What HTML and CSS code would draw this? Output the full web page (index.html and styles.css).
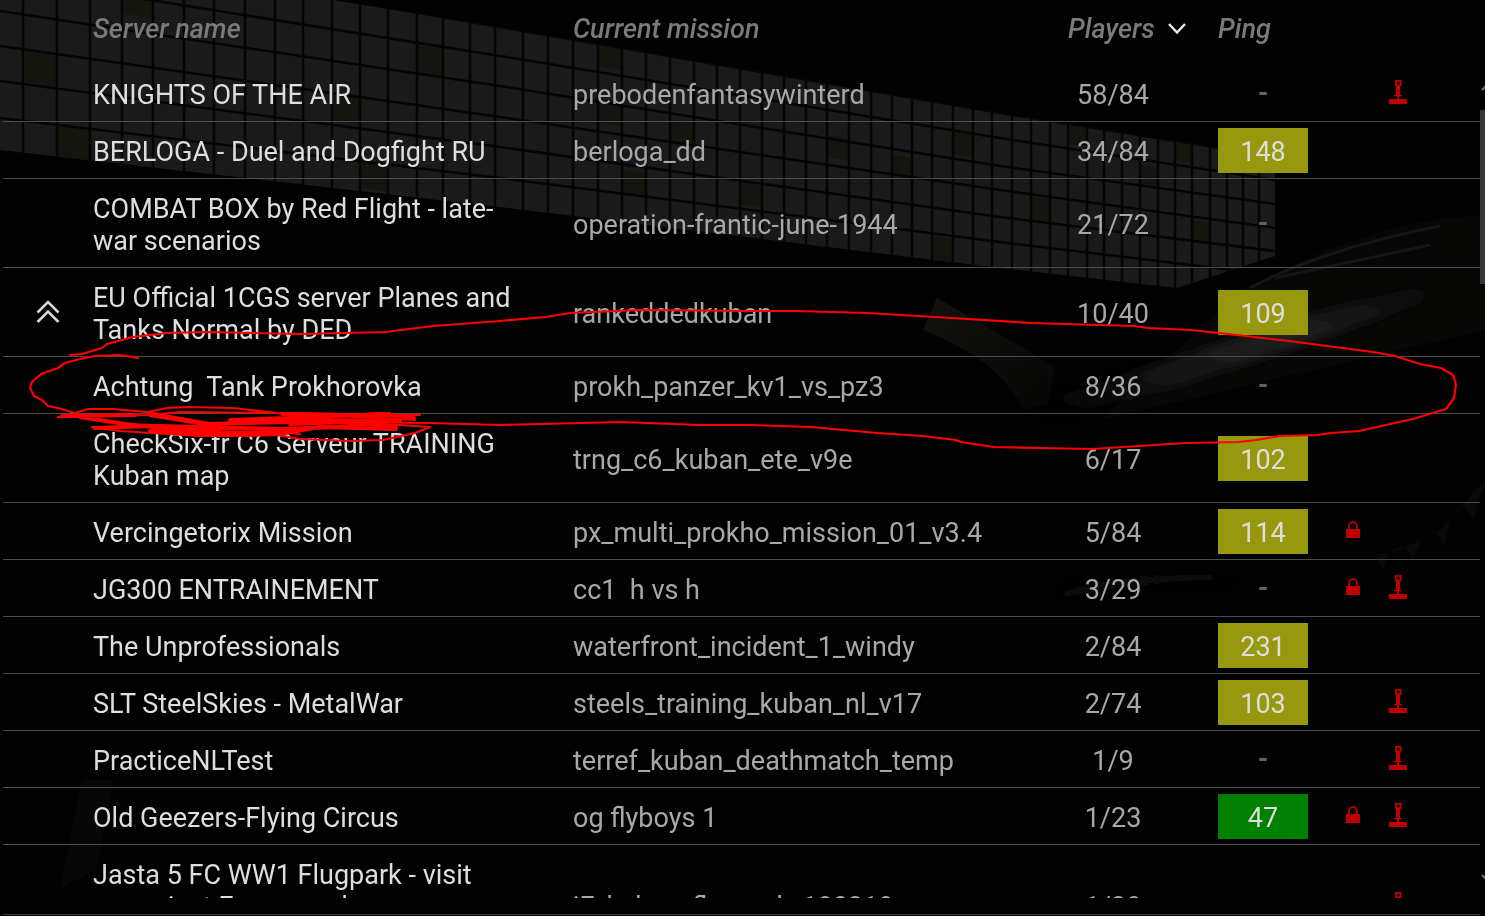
FILE: index.html
```html
<!DOCTYPE html>
<html lang="en">
<head>
    <meta charset="UTF-8">
    <meta name="viewport" content="width=device-width, initial-scale=1.0">
    <title>Servers</title>
    <link rel="stylesheet" href="styles.css">
</head>
<body>
    <!-- Hangar behind the list -->
    <svg class="hangar" viewBox="0 0 1485 916" preserveAspectRatio="xMinYMin slice" aria-hidden="true">
        <defs>
            <clipPath id="windowShape">
                <path d="M0 0H333L500 27L1000 113L1275 157V256L1177 288L1000 268L500 207L0 150Z"/>
            </clipPath>
            <linearGradient id="glint" x1="0" y1="1" x2="1" y2="0">
                <stop offset="0" stop-color="#1c1c1c" stop-opacity="0"/>
                <stop offset="0.6" stop-color="#202020"/>
                <stop offset="1" stop-color="#1c1c1c" stop-opacity="0"/>
            </linearGradient>
            <linearGradient id="cone" x1="0" y1="0" x2="1" y2="1">
                <stop offset="0" stop-color="#12120f"/>
                <stop offset="1" stop-color="#060605"/>
            </linearGradient>
            <filter id="soft"><feGaussianBlur stdDeviation="5"/></filter>
        </defs>
        <g clip-path="url(#windowShape)">
            <rect width="1300" height="300" fill="#1a1a1a"/>
            <path fill="#14150f" d="M25 50l31 5v32l-31-5zM58 125l32 4v34l-32-4zM124 0h29v18l-29-4zM333 92l27 4v28l-27-4zM417 45l26 4v28l-26-4zM361 160l26 3v28l-26-3zM598 42l23 4v24l-23-4zM598 98l23 4v24l-23-4zM623 170l22 3v24l-22-3zM671 120l22 3v24l-22-3zM741 180l20 3v24l-20-3zM828 135l20 3v22l-20-3zM893 155l18 3v22l-18-3zM953 130l19 3v24l-19-3zM933 236l19 3v24l-19-3zM1070 126l16 3v18l-16-3zM1141 165l16 3v18l-16-3zM1175 142l16 3v18l-16-3zM1193 220l16 3v18l-16-3zM1032 197l17 2v22l-17-2z"/>
            <path class="frame" d="M0 -59L500 27L1000 113L1275 157M0 -24L500 56L1000 138L1275 180M0 11L500 86L1000 166L1275 204M0 46L500 117L1000 190L1275 228M0 81L500 147L1000 217L1275 251M0 118L500 178L1000 242L1275 275"/>
            <path class="frame" d="M23 0V300M57 0V300M90 0V300M122 0V300M153 0V300M184 0V300M214 0V300M245 0V300M275 0V300M303 0V300M332 0V300M360 0V300M388 0V300M417 0V300M443 0V300M470 0V300M495 0V300M523 0V300M548 0V300M573 0V300M598 0V300M622 0V300M646 0V300M670 0V300M694 0V300M717 0V300M740 0V300M762 0V300M784 0V300M806 0V300M827 0V300M849 0V300M871 0V300M892 0V300M912 0V300M932 0V300M953 0V300M973 0V300M992 0V300M1012 0V300M1031 0V300M1050 0V300M1068 0V300M1087 0V300M1104 0V300M1122 0V300M1140 0V300M1158 0V300M1175 0V300M1192 0V300M1210 0V300M1227 0V300M1243 0V300M1259 0V300"/>
        </g>
        <path fill="#070706" d="M1240 292Q1380 215 1485 216V330L1100 420Z"/>
        <path fill="none" stroke="#151515" stroke-width="3" d="M1250 288Q1320 250 1440 226M1275 278Q1350 262 1430 245"/>
        <path fill="url(#glint)" filter="url(#soft)" d="M1040 402L1200 350L1320 312L1440 280L1420 304L1310 342L1180 386L1045 420Z"/>
        <path fill="url(#cone)" d="M937 298L923 330Q1000 360 1024 410L1048 404L1055 367Q1010 340 937 298Z"/>
        <path fill="#111111" filter="url(#soft)" d="M1060 592Q1120 572 1230 574L1225 580Q1130 582 1064 598Z"/>
        <path fill="#090909" d="M1355 560l20-5 8 14 6-18 16-5 8 16 8-22 14-10 9 17 6-27 14-14 10 14 5-24 6-10V480L1440 530L1400 550Z"/>
        <path fill="#070707" d="M82 780h32l-18 90-36 18z"/>
    </svg>

    <!-- Icons used in the rows -->
    <svg class="sprite" aria-hidden="true">
        <symbol id="lock" viewBox="0 0 14 18">
            <path d="M3 9V5.500a4 4.500 0 0 1 8 0V9" fill="none" stroke="currentColor" stroke-width="1.800"/>
            <rect y="8" width="14" height="9" fill="currentColor"/>
        </symbol>
        <symbol id="stick" viewBox="0 0 18 24">
            <path fill="currentColor" fill-rule="evenodd" d="M6 0h6.500v5.500L11 7v8h2v1.300h-3V19h8v5H0v-5h8v-2.700H5V15h2V7L6 5.500zM7.800 1.800v2.600h2.800V1.800z"/>
        </symbol>
    </svg>

    <main class="browser">
        <div class="list">
            <table class="servers">
                <colgroup>
                    <col class="col-rank">
                    <col class="col-name">
                    <col class="col-mission">
                    <col class="col-players">
                    <col class="col-ping">
                    <col class="col-flags">
                </colgroup>
                <thead>
                    <tr>
                        <th></th>
                        <th>Server name</th>
                        <th>Current mission</th>
                        <th>
                            <button type="button" class="sort">Players
                                <svg width="20" height="14" viewBox="0 0 20 14" aria-hidden="true"><path d="M2 2L10 10.500L18 2" fill="none" stroke="#e8e8e8" stroke-width="2.500"/></svg>
                            </button>
                        </th>
                        <th>Ping</th>
                        <th></th>
                    </tr>
                </thead>
                <tbody>
                    <tr>
                        <td></td>
                        <td class="name">KNIGHTS OF THE AIR</td>
                        <td>prebodenfantasywinterd</td>
                        <td class="players">58/84</td>
                        <td class="ping none">-</td>
                        <td class="flags"><div><span></span><span><svg class="stick"><use href="#stick"/></svg></span></div></td>
                    </tr>
                    <tr>
                        <td></td>
                        <td class="name">BERLOGA - Duel and Dogfight RU</td>
                        <td>berloga_dd</td>
                        <td class="players">34/84</td>
                        <td class="ping"><span class="badge">148</span></td>
                        <td></td>
                    </tr>
                    <tr>
                        <td></td>
                        <td class="name">COMBAT BOX by Red Flight - late-war scenarios</td>
                        <td>operation-frantic-june-1944</td>
                        <td class="players">21/72</td>
                        <td class="ping none">-</td>
                        <td></td>
                    </tr>
                    <tr>
                        <td class="rank">
                            <svg width="24" height="24" viewBox="0 0 24 24" aria-hidden="true"><path d="M1.500 12.500L12 2L22.500 12.500M1.500 22L12 11.500L22.500 22" fill="none" stroke="#d8d8d8" stroke-width="2.500"/></svg>
                        </td>
                        <td class="name">EU Official 1CGS server Planes and Tanks Normal by DED</td>
                        <td>rankeddedkuban</td>
                        <td class="players">10/40</td>
                        <td class="ping"><span class="badge">109</span></td>
                        <td></td>
                    </tr>
                    <tr>
                        <td></td>
                        <td class="name">Achtung&nbsp; Tank Prokhorovka</td>
                        <td>prokh_panzer_kv1_vs_pz3</td>
                        <td class="players">8/36</td>
                        <td class="ping none">-</td>
                        <td></td>
                    </tr>
                    <tr>
                        <td></td>
                        <td class="name">CheckSix-fr C6 Serveur TRAINING Kuban map</td>
                        <td>trng_c6_kuban_ete_v9e</td>
                        <td class="players">6/17</td>
                        <td class="ping"><span class="badge">102</span></td>
                        <td></td>
                    </tr>
                    <tr>
                        <td></td>
                        <td class="name">Vercingetorix Mission</td>
                        <td>px_multi_prokho_mission_01_v3.4</td>
                        <td class="players">5/84</td>
                        <td class="ping"><span class="badge">114</span></td>
                        <td class="flags"><div><span><svg class="lock"><use href="#lock"/></svg></span><span></span></div></td>
                    </tr>
                    <tr>
                        <td></td>
                        <td class="name">JG300 ENTRAINEMENT</td>
                        <td>cc1&nbsp; h vs h</td>
                        <td class="players">3/29</td>
                        <td class="ping none">-</td>
                        <td class="flags"><div><span><svg class="lock"><use href="#lock"/></svg></span><span><svg class="stick"><use href="#stick"/></svg></span></div></td>
                    </tr>
                    <tr>
                        <td></td>
                        <td class="name">The Unprofessionals</td>
                        <td>waterfront_incident_1_windy</td>
                        <td class="players">2/84</td>
                        <td class="ping"><span class="badge">231</span></td>
                        <td></td>
                    </tr>
                    <tr>
                        <td></td>
                        <td class="name">SLT SteelSkies - MetalWar</td>
                        <td>steels_training_kuban_nl_v17</td>
                        <td class="players">2/74</td>
                        <td class="ping"><span class="badge">103</span></td>
                        <td class="flags"><div><span></span><span><svg class="stick"><use href="#stick"/></svg></span></div></td>
                    </tr>
                    <tr>
                        <td></td>
                        <td class="name">PracticeNLTest</td>
                        <td>terref_kuban_deathmatch_temp</td>
                        <td class="players">1/9</td>
                        <td class="ping none">-</td>
                        <td class="flags"><div><span></span><span><svg class="stick"><use href="#stick"/></svg></span></div></td>
                    </tr>
                    <tr>
                        <td></td>
                        <td class="name">Old Geezers-Flying Circus</td>
                        <td>og flyboys 1</td>
                        <td class="players">1/23</td>
                        <td class="ping"><span class="badge good">47</span></td>
                        <td class="flags"><div><span><svg class="lock"><use href="#lock"/></svg></span><span><svg class="stick"><use href="#stick"/></svg></span></div></td>
                    </tr>
                    <tr>
                        <td></td>
                        <td class="name">Jasta 5 FC WW1 Flugpark - visit us&nbsp;project Forum and server information</td>
                        <td>jF_kuban_flugpark_180318</td>
                        <td class="players">1/20</td>
                        <td></td>
                        <td class="flags"><div><span></span><span><svg class="stick"><use href="#stick"/></svg></span></div></td>
                    </tr>
                </tbody>
            </table>
        </div>
        <div class="scrollbar" aria-hidden="true">
            <svg width="12" height="8" viewBox="0 0 12 8"><path d="M2 6L7 1L12 6" fill="none" stroke="#777" stroke-width="2"/></svg>
            <div class="track"><div class="thumb"></div></div>
            <svg width="12" height="8" viewBox="0 0 12 8"><path d="M2 1L7 6L12 1" fill="none" stroke="#777" stroke-width="2"/></svg>
        </div>
    </main>

    <!-- Red pen marks over the list -->
    <svg class="marks" viewBox="0 0 1485 916" preserveAspectRatio="xMinYMin slice" aria-hidden="true">
        <path d="M70 355L82 354L102 348L107 344L133 337L167 333L207 332L300 334L387 332L393 331L433 326L500 321L545 317L570 313L640 310L750 311L797 311L867 313L952 318L1031 323L1134 326L1148 328L1191 330L1219 333L1289 341L1373 352L1395 356L1420 364L1441 368L1453 375L1456 384L1454 398L1446 409L1413 419L1399 422L1359 431L1331 433L1317 435L1280 436L1256 440L1238 442L1186 443L1092 449L1041 448L994 447L961 442L956 440L923 436L877 433L811 427L750 425L700 425L620 422L540 424L500 425L430 423L330 422"/>
        <path d="M138 358L120 355L95 356L80 359L65 363L58 368L41 374L32 382L30 388L34 396L42 400L48 406L58 408L75 413L88 409L113 409L147 412L170 416L215 424L283 418L390 413"/>
        <path d="M58 417L150 415L180 412L277 413L415 420M147 412L167 408L187 407L233 408L277 413L420 415M150 414L200 424L300 434"/>
        <path d="M92 427L120 431L200 436L247 436L277 435L300 439L350 441L383 440L415 433L430 427L400 425L350 425L240 434"/>
        <path class="thick" d="M62 416L135 415M80 417L125 424L200 432L270 433M95 428L150 426L220 430M120 425L200 427L280 429L340 427M150 415L205 424L290 422M230 420L290 418L380 414L414 418M282 414L340 415L410 416M275 421L330 420L400 421M150 431L220 434L285 433L320 427L396 429M290 424L345 422L396 426"/>
    </svg>
</body>
</html>
```
FILE: styles.css
```css
* {
    box-sizing: border-box;
}
body {
    margin: 0;
    background-color: #020202;
    color: #a8a8a8;
    font-family: Roboto, "Liberation Sans", sans-serif;
    font-size: 27px;
    line-height: 32px;
    overflow: hidden;
}
.hangar, .marks {
    position: fixed;
    top: 0;
    left: 0;
    width: 100%;
    height: 100%;
}
.hangar {
    z-index: -1;
}
.frame {
    fill: none;
    stroke: #050503;
    stroke-width: 2.5;
}
.marks {
    pointer-events: none;
}
.marks path {
    fill: none;
    stroke: #ff0000;
    stroke-width: 2.2;
    stroke-linecap: round;
    stroke-linejoin: round;
}
.marks .thick {
    stroke-width: 4;
}
.sprite {
    display: none;
}
.browser {
    display: flex;
    height: 100vh;
    padding-left: 3px;
}
.list {
    flex: 1;
    height: calc(100vh - 1px);
    border-bottom: 1px solid #3c3c3c;
    padding-bottom: 16px;
    overflow: clip;
    overflow-clip-margin: content-box;
}
.servers {
    width: 100%;
    table-layout: fixed;
    border-spacing: 0;
}
.col-rank, .col-ping {
    width: 90px;
}
.col-name {
    width: 480px;
}
.col-players {
    width: 150px;
}
.col-flags {
    width: 172px;
}
th {
    height: 65px;
    padding: 0 0 8px;
    color: #7a7a7a;
    font-weight: 500;
    font-style: italic;
    text-align: left;
}
.sort {
    display: flex;
    align-items: center;
    gap: 12px;
    padding: 0;
    border: none;
    background: none;
    color: inherit;
    font: inherit;
    cursor: pointer;
}
td {
    padding: 14px 0 10px;
    border-bottom: 1px solid #4c4c4c;
}
.rank {
    padding: 0;
}
.rank svg {
    display: block;
    margin: 0 auto;
}
.name {
    padding-right: 50px;
    color: #dedede;
}
.players {
    padding-right: 60px;
    text-align: center;
}
.ping {
    padding: 0;
    text-align: center;
}
.none {
    color: #626262;
    font-weight: 700;
}
.badge {
    display: block;
    height: 45px;
    line-height: 48px;
    background-color: #98980e;
    color: #dedede;
}
.good {
    background-color: #008000;
}
.flags {
    padding: 0 0 2px 22px;
    color: #c00000;
}
.flags div {
    display: flex;
    align-items: center;
}
.flags span {
    display: flex;
    justify-content: center;
    width: 45px;
}
.lock {
    width: 14px;
    height: 18px;
}
.stick {
    width: 18px;
    height: 24px;
}
.scrollbar {
    display: flex;
    flex-direction: column;
    width: 5px;
    padding: 84px 0 34px;
    overflow: hidden;
}
.scrollbar svg {
    flex: none;
}
.track {
    flex: 1;
    padding: 18px 0;
}
.thumb {
    height: 174px;
    background-color: #363636;
}
```
